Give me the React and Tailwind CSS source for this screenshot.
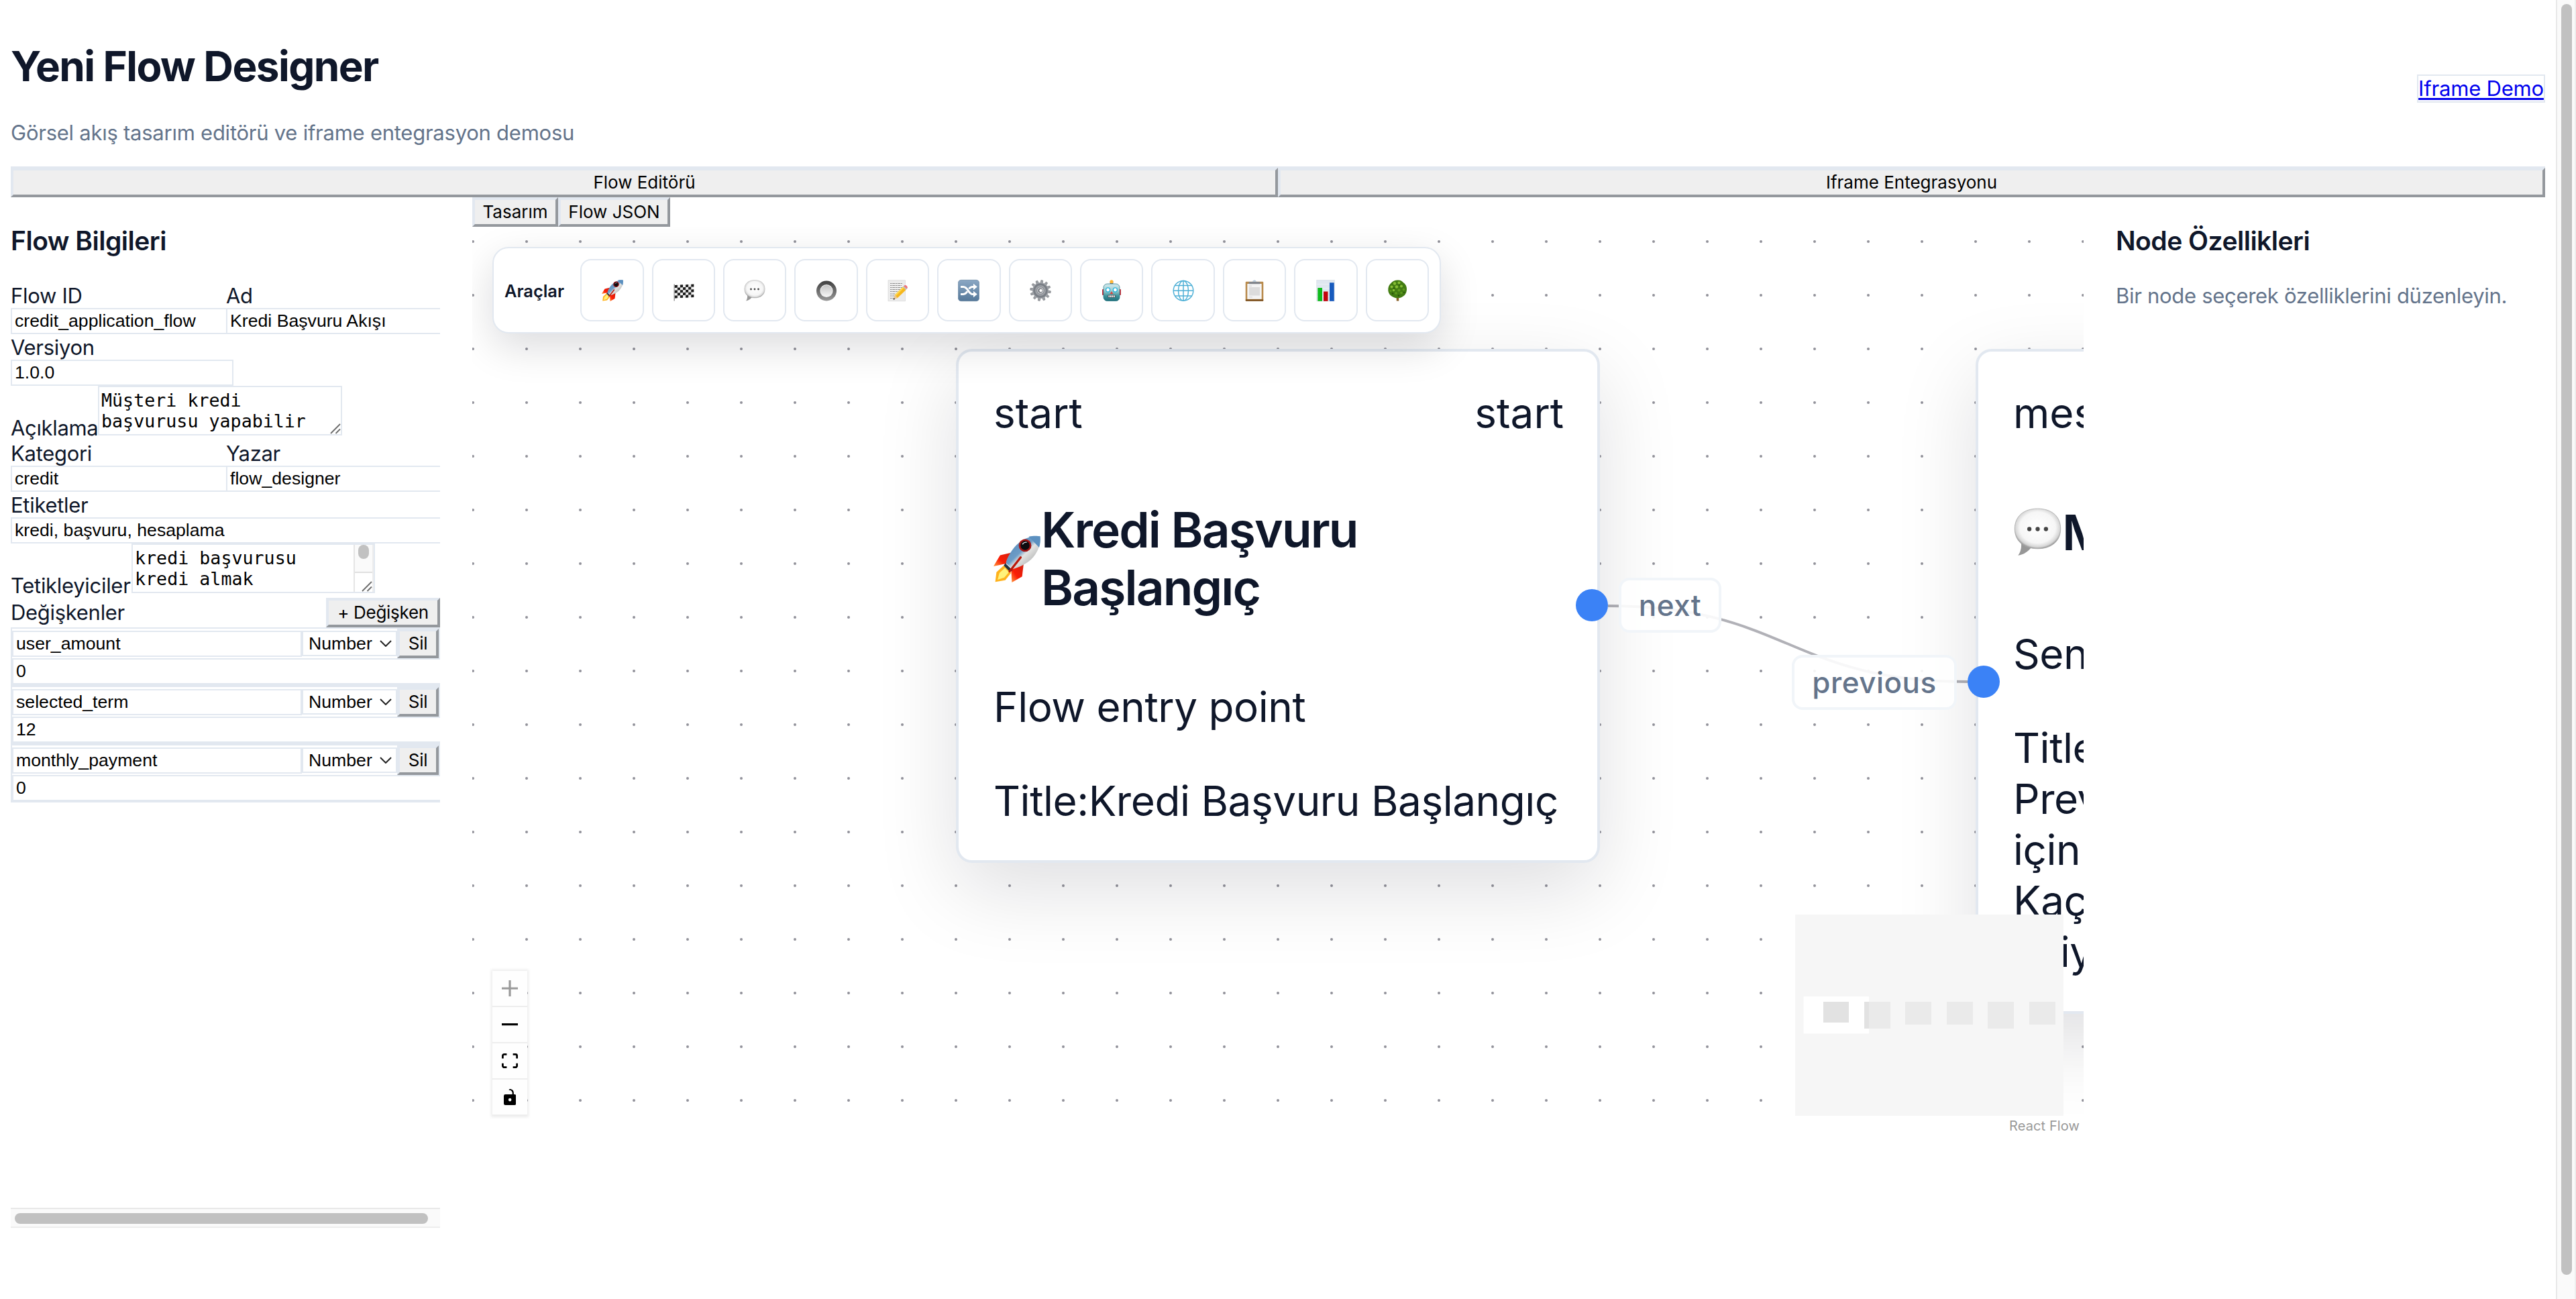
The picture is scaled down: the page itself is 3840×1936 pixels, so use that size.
import React from "react";

/* ---------- emoji-style glyphs, drawn on a 32 x 32 grid ---------- */

function Rocket({ className }) {
  return (
    <svg viewBox="0 0 32 32" className={className}>
      <defs>
        <linearGradient id="rk-body" x1="0" y1="0" x2="1" y2="1">
          <stop offset="0" stopColor="#4f86b8" />
          <stop offset=".45" stopColor="#6d9cc6" />
          <stop offset=".55" stopColor="#e4e4e2" />
          <stop offset="1" stopColor="#8d8f92" />
        </linearGradient>
        <linearGradient id="rk-fin" x1="1" y1="0" x2="0" y2="1">
          <stop offset="0" stopColor="#d3200f" />
          <stop offset=".6" stopColor="#fb1d06" />
          <stop offset="1" stopColor="#ff9a3d" />
        </linearGradient>
      </defs>
      <path d="M13 11.5 4.5 13.5 0 21l9.500-2z" fill="url(#rk-fin)" />
      <path d="M20.5 19.5 19.5 28 12.5 32l-.5-9z" fill="url(#rk-fin)" />
      <path d="M7 20.500 2 25l-.8 6.600L8 30.500l4-5z" fill="#ffb21c" />
      <path d="M7.800 22 4 25.600l-1.200 4.600 4.600-1.500 3-3.600z" fill="#fff27a" />
      <path d="M31.800.6C26 0 19.500 2.200 15 7.200 11.500 11.200 8.800 16 8.500 18.700l4.300 4.300c3.200-.7 8.700-3 12.700-6.500C30.300 11.700 32.200 6.200 31.800.6z" fill="url(#rk-body)" />
      <path d="M24 .8c3-.7 6-.6 7.800-.2.3 2.200.1 5.200-.7 7.600z" fill="#5b90c0" />
      <path d="m8 18.800 5 5-1.800 1L7 20.600z" fill="#26323d" />
      <path d="M18.500 15 11 24.500" stroke="#b9180b" strokeWidth="1.500" strokeLinecap="round" />
      <circle cx="21.500" cy="6.800" r="4.300" fill="#a31414" />
      <circle cx="21.500" cy="6.800" r="3.100" fill="#0c0c10" />
      <path d="M19.700 6.100c.6-1.100 1.800-1.700 3-1.400" stroke="#d8d8de" strokeWidth=".6" fill="none" />
    </svg>
  );
}

function CheckeredFlag({ className }) {
  const cells = [];
  for (let r = 0; r < 5; r++) for (let c = 0; c < 7; c++) if ((r + c) % 2 === 0) cells.push([c, r]);
  return (
    <svg viewBox="0 0 32 32" className={className}>
      <rect x="1.500" y="6.500" width="1.300" height="25" fill="#8b8b8b" />
      <g transform="translate(2.800 8) skewY(-3)">
        <rect width="28.500" height="19.500" fill="#efefef" />
        {cells.map(([c, r]) => (
          <rect key={`${c}-${r}`} x={c * 4.07} y={r * 3.9} width="4.070" height="3.900" fill="#1b1b1b" />
        ))}
      </g>
    </svg>
  );
}

function Bubble({ className }) {
  return (
    <svg viewBox="0 0 32 32" className={className}>
      <defs>
        <radialGradient id="bb-fill" cx=".5" cy=".47" r=".54">
          <stop offset="0" stopColor="#fff" />
          <stop offset=".72" stopColor="#f6f6f6" />
          <stop offset=".9" stopColor="#d6d6d6" />
          <stop offset="1" stopColor="#8e8e8e" />
        </radialGradient>
      </defs>
      <path d="M5 22.500c.6 3.500-.4 7-2 8.900 3.600-.2 7-2.700 9-5.600z" fill="#979797" />
      <path d="M16 .5c9.500 0 15.200 5.300 15.200 13.300S25.500 27 16 27 .8 21.800.8 13.800 6.500.5 16 .5z" fill="url(#bb-fill)" stroke="#a6a6a6" strokeWidth=".35" />
      <circle cx="10.500" cy="14" r="1.400" fill="#444" />
      <circle cx="16" cy="14" r="1.400" fill="#444" />
      <circle cx="21.500" cy="14" r="1.400" fill="#444" />
    </svg>
  );
}

function RadioButton({ className }) {
  return (
    <svg viewBox="0 0 32 32" className={className}>
      <defs>
        <linearGradient id="rb-ring" x1="0" y1="0" x2="0" y2="1">
          <stop offset="0" stopColor="#3f3f3f" />
          <stop offset="1" stopColor="#9a9a9a" />
        </linearGradient>
        <linearGradient id="rb-in" x1="0" y1="0" x2="0" y2="1">
          <stop offset="0" stopColor="#c4c4c4" />
          <stop offset="1" stopColor="#f6f6f6" />
        </linearGradient>
      </defs>
      <circle cx="16" cy="16.500" r="15" fill="url(#rb-ring)" />
      <circle cx="16" cy="16.500" r="9.600" fill="#eee" />
      <circle cx="16" cy="16.500" r="8.600" fill="url(#rb-in)" />
    </svg>
  );
}

function Memo({ className }) {
  return (
    <svg viewBox="0 0 32 32" className={className}>
      <rect x="2" y=".8" width="25.500" height="31" fill="#ececec" stroke="#d2d2d2" strokeWidth=".6" />
      <g stroke="#8f8f8f" strokeWidth="1" strokeDasharray="2.500 .8 4 .7">
        <path d="M5 5.500h18M5 8.500h17M5 11.500h18M5 14.500h15M5 17.500h13M5 21h8M5 24h6M5 27.500h5" />
      </g>
      <path d="m10 29 2-6.500L24 10.500l4.500 4.500L16 27z" fill="#f6b71d" />
      <path d="m12 22.500 12-12 1.500 1.500-12 12z" fill="#ffd94f" />
      <path d="m10 29 2-6.500 4 4.500z" fill="#e9c595" />
      <path d="m9.500 30 .9-3 2 1.800z" fill="#333" />
      <path d="m24 10.500 1.800-1.700 4.500 4.500-1.800 1.700z" fill="#b9bcc0" />
      <path d="m25.300 9.300 1-1c2-1 5 1.500 4.500 4l-1 1z" fill="#f0737a" />
    </svg>
  );
}

function Shuffle({ className }) {
  return (
    <svg viewBox="0 0 32 32" className={className}>
      <defs>
        <linearGradient id="sh-bg" x1="0" y1="0" x2="0" y2="1">
          <stop offset="0" stopColor="#8ba7c4" />
          <stop offset="1" stopColor="#557899" />
        </linearGradient>
      </defs>
      <rect x=".3" y=".3" width="31.400" height="31.400" rx="4.500" fill="url(#sh-bg)" stroke="#5f7d9b" strokeWidth=".6" />
      <g fill="none" stroke="#fff" strokeWidth="2.900">
        <path d="M4 10.500h4c7 0 7.500 11 14 11h2.500" />
        <path d="M4 21.500h4c3 0 4.600-2 6-4.200M16.500 13.500c1.300-1.800 3-3 5.500-3h2.500" />
      </g>
      <path d="m23 5.800 5.800 4.700L23 15.200zM23 16.800l5.800 4.700-5.800 4.700z" fill="#fff" />
    </svg>
  );
}

function Gear({ className }) {
  const teeth = Array.from({ length: 12 }, (_, i) => i * 30 + 8);
  return (
    <svg viewBox="0 0 32 32" className={className}>
      {teeth.map((a) => (
        <path key={a} d="M14 6 14.700.6h2.800l.6 5.400z" fill="#9a9da2" stroke="#74777c" strokeWidth=".5" transform={`rotate(${a} 16 16)`} />
      ))}
      <circle cx="16" cy="16" r="12" fill="#a4a7ac" />
      <circle cx="16" cy="16" r="9.300" fill="none" stroke="#7a7f86" strokeWidth="3" />
      <circle cx="16" cy="16" r="6.300" fill="#8f9399" />
      <circle cx="16" cy="16" r="4.600" fill="#d0d2d5" />
      <circle cx="16" cy="16" r="3.300" fill="#5b5f66" />
      <circle cx="16.500" cy="16" r="2.300" fill="#fff" />
    </svg>
  );
}

function Robot({ className }) {
  return (
    <svg viewBox="0 0 32 32" className={className}>
      <defs>
        <linearGradient id="ro-face" x1="0" y1="0" x2="0" y2="1">
          <stop offset="0" stopColor="#d3e9ec" />
          <stop offset=".4" stopColor="#9fcfd3" />
          <stop offset=".7" stopColor="#3d939b" />
          <stop offset="1" stopColor="#1f6d78" />
        </linearGradient>
      </defs>
      <rect x="13.700" y="2" width="4.600" height="5" rx="1" fill="#4b5a86" />
      <circle cx="16" cy="2.800" r="2.600" fill="#ffb733" />
      <rect x="2" y="14" width="4" height="9" rx="1" fill="#c8313c" />
      <rect x="26" y="14" width="4" height="9" rx="1" fill="#c8313c" />
      <rect x="4" y="6" width="24" height="25.500" rx="5.500" fill="url(#ro-face)" stroke="#1f7481" strokeWidth=".7" />
      <circle cx="10.600" cy="15" r="3.700" fill="#27b5dc" />
      <circle cx="21.400" cy="15" r="3.700" fill="#27b5dc" />
      <circle cx="10.600" cy="15" r="2.400" fill="#fff" />
      <circle cx="21.400" cy="15" r="2.400" fill="#fff" />
      <path d="m16 17 2.500 4.300h-5z" fill="#d8423d" />
      <rect x="10.500" y="22.800" width="11" height="3.600" fill="#41343a" />
      <path d="M11.500 23.300h1.700v2.600h-1.700zM14 23.300h1.700v2.600H14zM16.500 23.300h1.700v2.600h-1.700zM19 23.300h1.700v2.600H19z" fill="#fff" />
    </svg>
  );
}

function Globe({ className }) {
  return (
    <svg viewBox="0 0 32 32" className={className}>
      <g fill="none" stroke="#4fb0d6" strokeWidth="1.500">
        <circle cx="16" cy="16.300" r="14.800" />
        <ellipse cx="16" cy="16.300" rx="7.500" ry="14.800" />
        <path d="M16 1.500v29.600M1.500 16.300h29M3.800 8.500h24.400M3.800 24h24.400" />
      </g>
    </svg>
  );
}

function Clipboard({ className }) {
  return (
    <svg viewBox="0 0 32 32" className={className}>
      <rect x="2.700" y="2.800" width="26.600" height="29" rx="1.300" fill="#b98b4d" />
      <rect x="2.700" y="29.300" width="26.600" height="2.500" rx="1" fill="#7c5120" />
      <rect x="5.300" y="6" width="21.400" height="22.800" fill="#f4f4f4" />
      <rect x="8" y="11" width="16" height="12.500" fill="#dcdcdc" />
      <path d="M8 9.200h4M8 25.800h5" stroke="#c8c8c8" strokeWidth=".8" />
      <path d="M12.500 3.200c.8-.2 1-2.800 3.500-2.800s2.700 2.600 3.500 2.800z" fill="#b8cad8" />
      <rect x="7.500" y="3" width="17" height="3.300" rx=".8" fill="#83878d" />
    </svg>
  );
}

function BarChart({ className }) {
  return (
    <svg viewBox="0 0 32 32" className={className}>
      <rect x="2.800" y=".6" width="26.400" height="31.200" fill="#dfe7ef" stroke="#cfd7df" strokeWidth=".6" />
      <path d="M3 6.500h26M3 12.500h26M3 18.500h26M3 24.500h26" stroke="#eef3f8" strokeWidth=".8" />
      <rect x="4.300" y="12" width="6.700" height="19.800" fill="#10bb1e" />
      <rect x="13" y="17.500" width="6.500" height="14.300" fill="#c1060d" />
      <rect x="22" y="4.300" width="6.700" height="27.500" fill="#175abd" />
    </svg>
  );
}

function Tree({ className }) {
  return (
    <svg viewBox="0 0 32 32" className={className}>
      <path d="M14.500 24h3.500l.3 7.500h-3.500z" fill="#8a6128" />
      <path d="M16.500.5c4-.3 6.500 1.500 8.500 3.800 3.300 2 5.300 6.200 5 10.200-.2 5-2.500 9-6.500 10.800-3.500 2.600-9.500 2.600-13.500.4C5.500 24 2.500 20 2.300 15.500 2 11 3.800 7 7 4.500 9.500 1.800 12.500.6 16.500.5z" fill="#427c12" />
      <g fill="#86bd35">
        <circle cx="12" cy="5.500" r="2.200" /><circle cx="18.500" cy="4.500" r="2" /><circle cx="7.500" cy="10.500" r="2" />
        <circle cx="15" cy="10.500" r="2.200" /><circle cx="22" cy="9.500" r="2" /><circle cx="10.500" cy="15.500" r="1.700" />
      </g>
      <g fill="#5f9b1e">
        <circle cx="18.500" cy="15.500" r="2" /><circle cx="25.500" cy="14.500" r="1.800" /><circle cx="6" cy="16.500" r="1.500" />
        <circle cx="14" cy="20" r="1.800" /><circle cx="22" cy="19.500" r="1.700" />
      </g>
      <g fill="#274f0b">
        <circle cx="9" cy="20.500" r="1.300" /><circle cx="18" cy="23.500" r="1.300" /><circle cx="26" cy="19" r="1.100" /><circle cx="19" cy="7.800" r=".9" /><circle cx="11" cy="12.500" r=".9" />
      </g>
    </svg>
  );
}

const TOOLS = [Rocket, CheckeredFlag, Bubble, RadioButton, Memo, Shuffle, Gear, Robot, Globe, Clipboard, BarChart, Tree];

/* ---------- shared controls ---------- */

function OutsetButton({ children, className = "" }) {
  return (
    <button
      className={`h-[44px] shrink-0 border-4 border-t-[#e2e8f0] border-l-[#e2e8f0] border-r-[#94989d] border-b-[#94989d] bg-[#efefef] text-center text-[26px] leading-[36px] font-normal whitespace-nowrap text-black ${className}`}
    >
      {children}
    </button>
  );
}

function Input({ value, className = "" }) {
  return (
    <input
      defaultValue={value}
      className={`h-[39px] shrink-0 border-2 border-[#e2e8f0] bg-white px-1 font-['Liberation_Sans',sans-serif] text-[26.67px] leading-[31px] font-normal tracking-normal text-black outline-none ${className}`}
    />
  );
}

function Label({ children }) {
  return <label className="block h-[38px] leading-[40px]">{children}</label>;
}

function Field({ label, value, className = "" }) {
  return (
    <div>
      <Label>{label}</Label>
      <Input value={value} className={`block ${className}`} />
    </div>
  );
}

function Grip() {
  return (
    <svg viewBox="0 0 16 16" className="h-4 w-4">
      <path d="M1 15 15 1M8.500 15 15 8.500" stroke="#6b6b6b" strokeWidth="1.800" fill="none" />
    </svg>
  );
}

function Variable({ name, value }) {
  return (
    <div className="h-[87px] w-[640px] border-2 border-[#e2e8f0]">
      <div className="flex h-[44px] items-center">
        <Input value={name} className="w-[432px]" />
        <div className="flex h-[38px] w-[142px] shrink-0 items-center border-2 border-[#e2e8f0] bg-white pl-[8px] font-['Liberation_Sans',sans-serif] text-[26.67px] leading-[31px] font-normal tracking-normal text-black">
          Number
          <svg viewBox="0 0 18 10" className="ml-[11px] h-[10px] w-[18px]">
            <path d="M1 1l8 8 8-8" stroke="#222" strokeWidth="2" fill="none" />
          </svg>
        </div>
        <OutsetButton className="w-[62px]">Sil</OutsetButton>
      </div>
      <Input value={value} className="block w-[660px]" />
    </div>
  );
}

/* ---------- panels ---------- */

function FlowInfo() {
  return (
    <aside className="flex h-[1536px] w-[640px] shrink-0 flex-col overflow-hidden">
      <h3 className="mt-10 mb-[39px] h-12 shrink-0 text-[39px] leading-[50px] font-semibold tracking-[-0.5px]">Flow Bilgileri</h3>
      <div className="grid shrink-0 grid-cols-[321px_321px]">
        <Field label="Flow ID" value="credit_application_flow" className="w-[332px]" />
        <Field label="Ad" value="Kredi Başvuru Akışı" className="relative w-[332px]" />
      </div>
      <Field label="Versiyon" value="1.0.0" className="w-[332px]" />
      <div className="flex h-[81px] shrink-0 items-end">
        <label className="h-[38px] w-[130px] leading-[39px] tracking-[-0.35px] whitespace-nowrap">Açıklama</label>
        <div className="flex h-[74px] w-[364px] items-end justify-between self-start border-2 border-[#e2e8f0] bg-white pl-[3px] font-['DejaVu_Sans_Mono',monospace] text-[26.67px] leading-[31px] font-normal tracking-normal text-black">
          <p className="self-start pt-1 whitespace-nowrap">
            Müşteri kredi
            <br />
            başvurusu yapabilir
          </p>
          <Grip />
        </div>
      </div>
      <div className="grid shrink-0 grid-cols-[321px_321px]">
        <Field label="Kategori" value="credit" className="w-[332px]" />
        <Field label="Yazar" value="flow_designer" className="relative w-[332px]" />
      </div>
      <Field label="Etiketler" value="kredi, başvuru, hesaplama" className="w-[660px]" />
      <div className="flex h-[81px] shrink-0 items-end">
        <label className="h-[38px] w-[180px] leading-[39px] whitespace-nowrap">Tetikleyiciler</label>
        <div className="flex h-[74px] w-[363px] justify-between self-start border-2 border-[#e2e8f0] bg-white pl-[3px] font-['DejaVu_Sans_Mono',monospace] text-[26.67px] leading-[31px] font-normal tracking-normal text-black">
          <p className="pt-1 whitespace-nowrap">
            kredi başvurusu
            <br />
            kredi almak
          </p>
          <div className="flex w-[30px] flex-col border-x-2 border-l-[#e5e5e5] border-r-[#ededed]">
            <div className="flex h-10 justify-center bg-[#fafafa]">
              <div className="h-[21px] w-4 rounded-full bg-[#c1c1c1]" />
            </div>
            <div className="flex h-[30px] items-end justify-end border-t-2 border-[#e0e0e0]">
              <Grip />
            </div>
          </div>
        </div>
      </div>
      <div className="flex h-[44px] shrink-0 items-center justify-between">
        <span>Değişkenler</span>
        <OutsetButton className="w-[170px]">+ Değişken</OutsetButton>
      </div>
      <Variable name="user_amount" value="0" />
      <Variable name="selected_term" value="12" />
      <Variable name="monthly_payment" value="0" />
      <div className="mt-auto h-[30px] shrink-0 border-y-2 border-t-[#e8e8e8] border-b-[#ededed] bg-[#fafafa] pt-[6px] pl-[6px]">
        <div className="h-4 w-[616px] rounded-full bg-[#c1c1c1]" />
      </div>
    </aside>
  );
}

function Toolbar() {
  return (
    <div className="absolute top-[30px] left-[30px] flex h-[129px] w-[1414px] items-center gap-3 rounded-[24px] border-2 border-[#e2e8f0] bg-white px-4 shadow-[0_20px_60px_rgba(2,6,23,0.14)]">
      <span className="mr-3 h-[38px] w-[90px] text-[25.4px] leading-[40px] font-semibold tracking-normal">Araçlar</span>
      {TOOLS.map((Icon, i) => (
        <div key={i} className="flex h-[93px] w-[94.4px] shrink-0 items-center justify-center rounded-[16px] border-2 border-[#e2e8f0] bg-white">
          <Icon className="h-[34px] w-[32px]" />
        </div>
      ))}
    </div>
  );
}

function NodeCard({ className, children }) {
  return (
    <div
      className={`absolute top-[182px] rounded-[24px] border-4 border-[#e2e8f0] bg-white pr-[50px] pl-[52px] pt-[54px] text-[62px] leading-[76px] tracking-[-0.45px] whitespace-nowrap shadow-[0_40px_120px_rgba(2,6,23,0.13)] ${className}`}
    >
      {children}
    </div>
  );
}

function EdgeLabel({ className, children }) {
  return (
    <div className={`absolute flex h-[82px] items-center justify-center rounded-[16px] border-4 border-[#f1f5f9] bg-white/90 text-[44px] leading-none font-medium tracking-[0.5px] text-[#64748b] ${className}`}>
      {children}
    </div>
  );
}

const MINI_NODES = [
  [42, 38, 31], [103, 39, 40], [164, 39, 34], [226, 39, 34], [287, 39, 40], [349, 39, 34],
];

function MiniMap() {
  return (
    <svg viewBox="0 0 400 300" className="absolute right-[30px] bottom-[30px] h-[300px] w-[400px] bg-white">
      {MINI_NODES.map(([x, w, h]) => (
        <rect key={x} x={x} y="130" width={w} height={h} fill="#e2e2e2" />
      ))}
      <path d="M0 0h400v300H0zM12.500 122v55.500h97.500V122z" fill="#f0f0f0" fillOpacity=".6" fillRule="evenodd" />
    </svg>
  );
}

const CONTROL_ICONS = [
  ["0 0 32 32", "h-6 w-6 fill-[#9a9a9a]", "M32 18.133H18.133V32h-4.266V18.133H0v-4.266h13.867V0h4.266v13.867H32z"],
  ["0 0 32 5", "h-[4px] w-6 fill-black", "M0 0h32v4.200H0z"],
  ["0 0 32 30", "h-[22.500px] w-6 fill-black", "M3.692 4.630c0-.53.4-.938.939-.938h5.215V0H4.708C2.130 0 0 2.054 0 4.630v5.216h3.692V4.631zM27.354 0h-5.200v3.692h5.170c.53 0 .984.4.984.939v5.215H32V4.631A4.624 4.624 0 0027.354 0zm.954 24.830c0 .532-.4.940-.939.940h-5.215v3.768h5.215c2.577 0 4.631-2.130 4.631-4.707v-5.139h-3.692v5.139zm-23.677.940c-.531 0-.939-.4-.939-.940v-5.138H0v5.139c0 2.577 2.130 4.707 4.708 4.707h5.138V25.770H4.631z"],
  ["0 0 25 32", "h-6 w-[18.750px] fill-black", "M21.333 10.667H19.810V7.619C19.810 3.429 16.380 0 12.190 0c-4.114 1.828-1.370 2.133.305 2.438 1.676.305 4.420 2.590 4.420 5.181v3.048H3.047A3.056 3.056 0 000 13.714v15.238A3.056 3.056 0 003.048 32h18.285a3.056 3.056 0 003.048-3.048V13.714a3.056 3.056 0 00-3.048-3.047zM12.190 24.533a3.056 3.056 0 01-3.047-3.047 3.056 3.056 0 013.047-3.048 3.056 3.056 0 013.048 3.048 3.056 3.056 0 01-3.048 3.047z"],
];

function Canvas() {
  return (
    <div className="relative h-[1355px] overflow-hidden bg-white">
      <svg className="absolute inset-0 h-full w-full">
        <defs>
          <pattern id="dots" x="-39" y="-18" width="80" height="80" patternUnits="userSpaceOnUse">
            <circle cx="40" cy="40" r="2" fill="#91919a" />
          </pattern>
        </defs>
        <rect width="100%" height="100%" fill="url(#dots)" />
        <path d="M1693 565C1961 565 1961 678 2229 678" fill="none" stroke="#b1b1b7" strokeWidth="4" />
      </svg>

      <NodeCard className="left-[721px] h-[766px] w-[960px]">
        <div className="flex justify-between tracking-normal">
          <span>start</span>
          <span>start</span>
        </div>
        <div className="mt-[93px] flex h-[172px] items-center">
          <Rocket className="-ml-px h-[70px] w-[72px] shrink-0" />
          <h3 className="text-[73px] leading-[86px] font-semibold tracking-[-1.900px]">
            Kredi Başvuru
            <br />
            Başlangıç
          </h3>
        </div>
        <p className="mt-[97px]">Flow entry point</p>
        <p className="mt-[64px]">Title:Kredi Başvuru Başlangıç</p>
      </NodeCard>

      <NodeCard className="left-[2241px] h-[991px] w-[980px]">
        <div className="tracking-normal">message</div>
        <div className="mt-[93px] flex h-[94px] items-center">
          <Bubble className="-mt-[3px] h-[72px] w-[73px] shrink-0" />
          <h3 className="text-[73px] leading-[86px] font-semibold tracking-[-1.900px]">Mesaj</h3>
        </div>
        <p className="mt-[96px]">Send message</p>
        <p className="mt-[64px]">
          Title:
          <br />
          Preview
          <br />
          için
          <br />
          Kaç
          <br />
          <span className="pl-[3px]">istiyor</span>
        </p>
      </NodeCard>

      <div className="absolute top-[540px] left-[1645px] h-12 w-12 rounded-full bg-[#3b82f6]" />
      <div className="absolute top-[654px] left-[2229px] h-12 w-12 rounded-full bg-[#3b82f6]" />
      <EdgeLabel className="top-[523px] left-[1709px] w-[153px]">next</EdgeLabel>
      <EdgeLabel className="top-[638px] left-[1967px] w-[246px]">previous</EdgeLabel>

      <Toolbar />

      <div className="absolute bottom-[30px] left-[30px] w-[52px] shadow-[0_0_4px_2px_rgba(0,0,0,0.08)]">
        {CONTROL_ICONS.map(([box, cls, d], i) => (
          <div key={i} className="flex h-[54px] items-center justify-center border-b-2 border-[#eee] bg-[#fefefe]">
            <svg viewBox={box} className={cls}>
              <path d={d} />
            </svg>
          </div>
        ))}
      </div>

      <MiniMap />
      <div className="absolute right-0 bottom-0 h-[30px] bg-white/50 px-[6px] text-[20px] leading-[30px] tracking-[0.1px] text-[#999]">React Flow</div>
    </div>
  );
}

export default function App() {
  return (
    <div className="flex h-[1936px] w-[3840px] overflow-hidden bg-white font-['Inter',sans-serif] text-[31px] font-[430] tracking-[-0.3px] text-[#0f172a]">
      <main className="w-[3810px] shrink-0 px-4 pt-4">
        <header className="flex h-[232px] items-center justify-between">
          <div className="flex h-full flex-col pt-[44px]">
            <h1 className="h-[78px] text-[62px] leading-[78px] font-bold tracking-[-1.600px]">Yeni Flow Designer</h1>
            <p className="mt-[41px] h-[38px] leading-[38px] tracking-[-0.25px] text-[#64748b]">Görsel akış tasarım editörü ve iframe entegrasyon demosu</p>
          </div>
          <a className="flex h-[42px] w-[191px] items-center justify-center border-2 border-[#e2e8f0] leading-[38px] tracking-[-0.2px] whitespace-nowrap text-[#0000ee] underline decoration-[3px] underline-offset-[3px]">
            Iframe Demo
          </a>
        </header>

        <div className="flex h-[46px] border-t-2 border-[#e2e8f0] tracking-normal">
          <OutsetButton className="w-1/2">Flow Editörü</OutsetButton>
          <OutsetButton className="w-1/2">Iframe Entegrasyonu</OutsetButton>
        </div>

        <div className="flex gap-12">
          <FlowInfo />
          <section className="w-[2402px] shrink-0">
            <div className="flex h-[44px] tracking-normal">
              <OutsetButton className="w-[128px]">Tasarım</OutsetButton>
              <OutsetButton className="w-[167px]">Flow JSON</OutsetButton>
            </div>
            <Canvas />
          </section>
          <aside className="w-[640px] shrink-0">
            <h3 className="mt-10 mb-[39px] h-12 text-[39px] leading-[50px] font-semibold tracking-[-0.5px]">Node Özellikleri</h3>
            <p className="leading-[40px] text-[#64748b]">Bir node seçerek özelliklerini düzenleyin.</p>
          </aside>
        </div>
      </main>

      <div className="w-[30px] shrink-0 border-x-2 border-l-[#e8e8e8] border-r-[#ededed] bg-[#fafafa] pt-[6px] pl-[6px]">
        <div className="h-[1894px] w-4 rounded-full bg-[#c1c1c1]" />
      </div>
    </div>
  );
}
